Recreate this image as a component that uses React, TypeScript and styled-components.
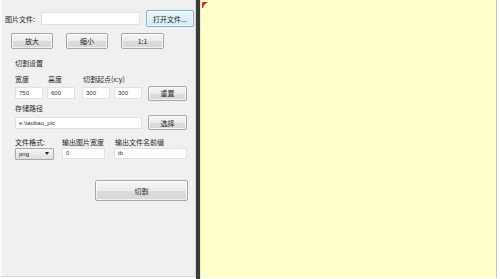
import React from "react";
import styled, { createGlobalStyle } from "styled-components";

const Global = createGlobalStyle`
  html, body { margin: 0; padding: 0; background: #ffffff; }
  body { font-family: "Noto Sans CJK SC", "Liberation Sans", sans-serif; }
  * { box-sizing: border-box; }
`;

const Window = styled.div`
  width: 500px;
  height: 279px;
  display: flex;
  background: #ffffff;
  overflow: hidden;
`;

const LeftPanel = styled.div`
  width: 196px;
  height: 277px;
  background: #f0f0f0;
  border-left: 2px solid #fafafa;
  border-bottom: 1px solid #d8d8d8;
  border-right: 1px solid #d4d4d4;
  display: flex;
  flex-direction: column;
  padding: 10px 0 0 3px;
  font-size: 7px;
  color: #222;
`;

const Divider = styled.div`
  width: 4px;
  height: 279px;
  background: #3b3b38;
`;

const Canvas = styled.div`
  width: 297px;
  height: 278px;
  background: #ffffc9;
  border-left: 1px solid #e8e8d0;
  border-right: 1px solid #c9c9bd;
  position: relative;
`;

const Marker = styled.svg`
  position: absolute;
  left: 1px;
  top: 2px;
`;

const Row = styled.div<{ $mt?: number; $pl?: number; $gap?: number; $h?: number }>`
  display: flex;
  align-items: center;
  margin-top: ${(p) => p.$mt ?? 0}px;
  padding-left: ${(p) => p.$pl ?? 0}px;
  gap: ${(p) => p.$gap ?? 0}px;
  height: ${(p) => p.$h ?? 16}px;
`;

const Label = styled.span<{ $w?: number }>`
  display: inline-block;
  width: ${(p) => (p.$w ? `${p.$w}px` : "auto")};
  font-size: 7px;
  line-height: 10px;
  white-space: nowrap;
  color: #1e1e1e;
`;

const Input = styled.div<{ $w: number; $h?: number }>`
  width: ${(p) => p.$w}px;
  height: ${(p) => p.$h ?? 12}px;
  background: #ffffff;
  border: 1px solid #e2e2e2;
  font-size: 6px;
  line-height: ${(p) => (p.$h ?? 12) - 2}px;
  padding-left: 3px;
  color: #333;
  font-family: "Liberation Sans", sans-serif;
  flex: none;
`;

const Button = styled.div<{ $w: number; $h?: number; $focus?: boolean }>`
  width: ${(p) => p.$w}px;
  height: ${(p) => p.$h ?? 16}px;
  border: 1px solid ${(p) => (p.$focus ? "#7fb4cf" : "#a6a6a6")};
  border-radius: 2px;
  background: ${(p) =>
    p.$focus
      ? "linear-gradient(#eaf5fb, #d6ebf6)"
      : "linear-gradient(#f5f5f5 0%, #ebebeb 50%, #dcdcdc 51%, #d6d6d6 100%)"};
  box-shadow: inset 0 0 0 1px rgba(255, 255, 255, 0.7);
  display: flex;
  align-items: center;
  justify-content: center;
  font-size: 7px;
  color: #1e1e1e;
  flex: none;
  white-space: nowrap;
`;

const Select = styled.div<{ $w: number }>`
  width: ${(p) => p.$w}px;
  height: 12px;
  border: 1px solid #a8a8a8;
  border-radius: 1px;
  background: linear-gradient(#f4f4f4, #dedede);
  display: flex;
  align-items: center;
  justify-content: space-between;
  padding: 0 4px 0 3px;
  font-size: 6px;
  font-family: "Liberation Sans", sans-serif;
  color: #222;
  flex: none;
`;

const Arrow = styled.span`
  width: 0;
  height: 0;
  border-left: 2px solid transparent;
  border-right: 2px solid transparent;
  border-top: 3px solid #222;
`;

const Section = styled.div`
  display: flex;
  flex-direction: column;
  padding-left: 10px;
`;

const Field = styled.div<{ $w: number }>`
  width: ${(p) => p.$w}px;
  flex: none;
`;

export default function App() {
  return (
    <>
      <Global />
      <Window>
        <LeftPanel>
          <Row $h={17}>
            <Label $w={36}>图片文件:</Label>
            <Input $w={99} $h={13} />
            <div style={{ width: 6 }} />
            <Button $w={48} $h={17} $focus>
              打开文件...
            </Button>
          </Row>
          <Row $mt={6} $pl={6} $gap={13} $h={16}>
            <Button $w={42}>放大</Button>
            <Button $w={42}>缩小</Button>
            <Button $w={43}>1:1</Button>
          </Row>
          <Section>
            <Row $mt={9} $h={10}>
              <Label>切割设置</Label>
            </Row>
            <Row $mt={6} $h={10}>
              <Field $w={33}><Label>宽度</Label></Field>
              <Field $w={35}><Label>高度</Label></Field>
              <Field $w={60}><Label>切割起点(x:y)</Label></Field>
            </Row>
            <Row $mt={1} $h={16}>
              <Input $w={28} $h={12}>750</Input>
              <div style={{ width: 4 }} />
              <Input $w={28} $h={12}>600</Input>
              <div style={{ width: 7 }} />
              <Input $w={28} $h={12}>300</Input>
              <div style={{ width: 4 }} />
              <Input $w={28} $h={12}>300</Input>
              <div style={{ width: 6 }} />
              <Button $w={39} $h={15}>重置</Button>
            </Row>
            <Row $mt={2} $h={10}>
              <Label>存储路径</Label>
            </Row>
            <Row $mt={2} $h={15}>
              <Input $w={127} $h={12}>e:\taobao_pic</Input>
              <div style={{ width: 6 }} />
              <Button $w={39} $h={15}>选择</Button>
            </Row>
            <Row $mt={7} $h={10}>
              <Field $w={47}><Label>文件格式:</Label></Field>
              <Field $w={53}><Label>输出图片宽度</Label></Field>
              <Field $w={70}><Label>输出文件名前缀</Label></Field>
            </Row>
            <Row $mt={0} $h={13}>
              <Select $w={39}>
                png
                <Arrow />
              </Select>
              <div style={{ width: 8 }} />
              <Input $w={43} $h={11}>0</Input>
              <div style={{ width: 9 }} />
              <Input $w={73} $h={11}>tb</Input>
            </Row>
            <Row $mt={20} $pl={80} $h={21}>
              <Button $w={93} $h={21}>切割</Button>
            </Row>
          </Section>
        </LeftPanel>
        <Divider />
        <Canvas>
          <Marker width="6" height="6" viewBox="0 0 6 6">
            <path d="M0 0 H6 Q2 2 1 6 H0 Z" fill="#e02a1a" />
          </Marker>
        </Canvas>
      </Window>
    </>
  );
}
